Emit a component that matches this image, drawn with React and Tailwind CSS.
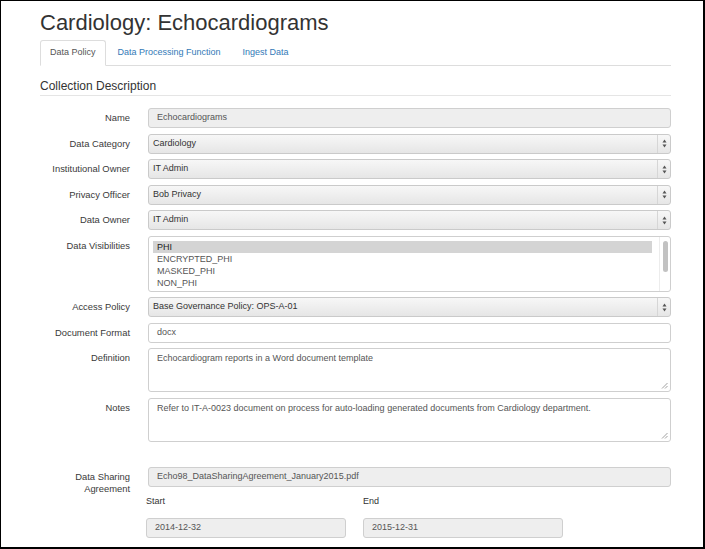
import React from "react";

const font = { fontFamily: '"Liberation Sans", Arial, sans-serif' };

const SelectArrows = () => (
  <div className="absolute right-0 top-0 bottom-0 w-[13px] border-l border-[#d6d6d6] flex items-center justify-center">
    <svg width="5" height="9" viewBox="0 0 5 9">
      <path d="M2.5 0.5 L4.5 3.5 L0.5 3.5 Z" fill="#555" />
      <path d="M2.5 8.5 L4.5 5.5 L0.5 5.5 Z" fill="#555" />
    </svg>
  </div>
);

const Grip = () => (
  <svg className="absolute right-[2px] bottom-[2px]" width="7" height="7" viewBox="0 0 7 7">
    <path d="M1 6.5 L6.5 1 M4 6.5 L6.5 4" stroke="#888" strokeWidth="0.8" />
  </svg>
);

const Row = ({ label, children, className = "mb-[5.5px]" }) => (
  <div className={`flex items-start ${className}`}>
    <div className="w-[90px] shrink-0 text-right pt-[4px] leading-[12px] text-[9.4px] text-[#3a3a3a]">
      {label}
    </div>
    <div className="ml-[18px] flex-1">{children}</div>
  </div>
);

const Disabled = ({ value }) => (
  <div className="h-[20px] rounded-[3px] border border-[#cfcfcf] bg-[#eeeeee] pl-[8px] flex items-center text-[9px] text-[#555]">
    {value}
  </div>
);

const Select = ({ value }) => (
  <div className="relative h-[20px] rounded-[3px] border border-[#cacaca] bg-gradient-to-b from-[#f7f7f7] to-[#e6e6e6] pl-[4px] flex items-center text-[9px] text-[#333]">
    {value}
    <SelectArrows />
  </div>
);

const TextArea = ({ value }) => (
  <div className="relative h-[44px] rounded-[3px] border border-[#cfcfcf] bg-white pl-[8px] pt-[3px] leading-[12px] text-[9px] text-[#555]">
    {value}
    <Grip />
  </div>
);

export default function App() {
  const visibilities = ["PHI", "ENCRYPTED_PHI", "MASKED_PHI", "NON_PHI"];

  return (
    <div
      style={font}
      className="w-[705px] h-[549px] overflow-hidden bg-white border-t border-l border-r-2 border-b-2 border-black pl-[39px] pr-[32px] pt-[9px]"
    >
      {/* Title */}
      <h1 className="text-[22px] leading-[26px] text-[#333]">Cardiology: Echocardiograms</h1>

      {/* Tabs */}
      <div className="mt-[4px] flex border-b border-[#dddddd] text-[9px]">
        <div className="h-[26px] -mb-px px-[9px] flex items-center border border-[#dddddd] border-b-white rounded-t-[3px] bg-white text-[#555]">
          Data Policy
        </div>
        <div className="h-[26px] -mb-px ml-[2px] px-[9px] flex items-center border border-transparent text-[#337ab7]">
          Data Processing Function
        </div>
        <div className="h-[26px] -mb-px ml-[2px] px-[9px] flex items-center border border-transparent text-[#337ab7]">
          Ingest Data
        </div>
      </div>

      {/* Legend */}
      <div className="mt-[13px] pb-[2px] border-b border-[#e5e5e5] text-[12px] leading-[14px] text-[#333]">
        Collection Description
      </div>

      <div className="mt-[12px]">
        <Row label="Name">
          <Disabled value="Echocardiograms" />
        </Row>
        <Row label="Data Category">
          <Select value="Cardiology" />
        </Row>
        <Row label="Institutional Owner">
          <Select value="IT Admin" />
        </Row>
        <Row label="Privacy Officer">
          <Select value="Bob Privacy" />
        </Row>
        <Row label="Data Owner">
          <Select value="IT Admin" />
        </Row>
        <Row label="Data Visibilities">
          <div className="relative h-[56px] rounded-[3px] border border-[#cfcfcf] bg-white pl-[4px] pr-[18px] pt-[4px] text-[9px] leading-[12px]">
            {visibilities.map((v, i) => (
              <div
                key={v}
                className={i === 0 ? "bg-[#d4d4d4] pl-[4px] text-[#222]" : "pl-[4px] text-[#555]"}
              >
                {v}
              </div>
            ))}
            <div className="absolute right-0 top-0 bottom-0 w-[11px] border-l border-[#ececec] flex justify-center pt-[4px]">
              <div className="w-[5px] h-[31px] rounded-full bg-[#c2c2c2]" />
            </div>
          </div>
        </Row>
        <Row label="Access Policy">
          <Select value="Base Governance Policy: OPS-A-01" />
        </Row>
        <Row label="Document Format">
          <div className="h-[20px] rounded-[3px] border border-[#cfcfcf] bg-white pl-[8px] flex items-center text-[9px] text-[#555]">
            docx
          </div>
        </Row>
        <Row label="Definition" className="mb-[6px]">
          <TextArea value="Echocardiogram reports in a Word document template" />
        </Row>
        <Row label="Notes" className="mb-[25px]">
          <TextArea value="Refer to IT-A-0023 document on process for auto-loading generated documents from Cardiology department." />
        </Row>
        <Row label={<>Data Sharing<br />Agreement</>} className="mb-0">
          <Disabled value="Echo98_DataSharingAgreement_January2015.pdf" />
        </Row>

        {/* Dates */}
        <div className="ml-[106px] flex gap-[17px] text-[9px]">
          <div className="w-[200px]">
            <div className="leading-[12px] text-[#333]">Start</div>
            <div className="mt-[11px]">
              <Disabled value="2014-12-32" />
            </div>
          </div>
          <div className="w-[200px]">
            <div className="leading-[12px] text-[#333]">End</div>
            <div className="mt-[11px]">
              <Disabled value="2015-12-31" />
            </div>
          </div>
        </div>
      </div>
    </div>
  );
}
